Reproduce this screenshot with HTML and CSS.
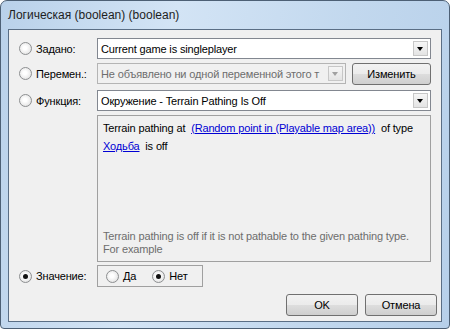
FILE: index.html
```html
<!DOCTYPE html>
<html>
  <head>
    <meta charset="UTF-8">
    <title>Логическая (boolean)</title>
    <link rel="stylesheet" href="styles.css">
  </head>
  <body>
  <div class="window">
    <div class="titlebar">Логическая (boolean) (boolean)</div>
    <div class="client">
      <!-- preset value -->
      <div class="row">
        <div class="choice"><span class="radio"></span>Задано:</div>
        <div class="combo"><span class="combo-text">Current game is singleplayer</span><span class="drop"></span></div>
      </div>
      <!-- variable -->
      <div class="row row2">
        <div class="choice"><span class="radio"></span>Перемен.:</div>
        <div class="combo disabled"><span class="combo-text">Не объявлено ни одной переменной этого т</span><span class="drop"></span></div>
        <button class="btn edit">Изменить</button>
      </div>
      <!-- function -->
      <div class="row row3">
        <div class="choice"><span class="radio"></span>Функция:</div>
        <div class="combo"><span class="combo-text">Окружение - Terrain Pathing Is Off</span><span class="drop"></span></div>
      </div>
      <div class="panel">
        <div class="call">Terrain pathing at&nbsp; <a href="#">(Random point in (Playable map area))</a>&nbsp; of type<br><a href="#">Ходьба</a>&nbsp; is off</div>
        <div class="hint">Terrain pathing is off if it is not pathable to the given pathing type.<br>For example</div>
      </div>
      <!-- constant value -->
      <div class="row row4">
        <div class="choice"><span class="radio on"></span>Значение:</div>
        <div class="group">
          <span class="opt"><span class="radio"></span>Да</span>
          <span class="opt"><span class="radio on"></span>Нет</span>
        </div>
      </div>
      <div class="buttons">
        <button class="btn">OK</button>
        <button class="btn">Отмена</button>
      </div>
    </div>
  </div>
  </body>
</html>
```

FILE: styles.css
```css
/* dialog frame */
body {
  margin: 0;
  font-family: "Liberation Sans", Arial, sans-serif;
  font-size: 11px;
  letter-spacing: -0.15px;
  color: #000;
}
.window {
  width: 450px;
  height: 329px;
  box-sizing: border-box;
  border: 1px solid #4d6075;
  border-radius: 7px 7px 4px 4px;
  padding: 0 7px 6px 7px;
  display: flex;
  flex-direction: column;
  background: linear-gradient(100deg, #b9d1ea 0%, #d3e4f5 35%, #c2d8ee 70%, #b7d0ea 100%);
}
.titlebar {
  height: 28px;
  line-height: 29px;
  font-size: 12px;
  letter-spacing: 0;
  color: #1e1e1e;
}
.client {
  flex: 1;
  border: 1px solid #5a6e85;
  background: #f0f0f0;
  padding: 8px 10px 0 10px;
}

/* rows */
.row {
  display: flex;
  align-items: center;
  height: 21px;
}
.row2 { margin-top: 4px; }
.row3 { margin-top: 6px; }
.row4 { margin-top: 3px; height: 22px; }
.choice {
  width: 78px;
  flex: none;
  display: flex;
  align-items: center;
}
.radio {
  width: 11px;
  height: 11px;
  border: 1px solid #8d8f91;
  border-radius: 50%;
  background: radial-gradient(circle at 45% 45%, #ffffff 20%, #ececec 60%, #d2d2d2 100%);
  margin-right: 4px;
  position: relative;
  flex: none;
}
.radio.on::after {
  content: "";
  position: absolute;
  left: 3px;
  top: 3px;
  width: 5px;
  height: 5px;
  border-radius: 50%;
  background: #111;
}

/* combo boxes */
.combo {
  flex: 1;
  height: 21px;
  box-sizing: border-box;
  border: 1px solid #828790;
  background: #fff;
  display: flex;
  align-items: center;
  padding-left: 3px;
  overflow: hidden;
}
.combo-text {
  flex: 1;
  white-space: nowrap;
  overflow: hidden;
}
.drop {
  width: 15px;
  height: 15px;
  box-sizing: border-box;
  margin-right: 2px;
  border: 1px solid #c7c7c7;
  background: linear-gradient(#f6f6f6, #e4e4e4);
  position: relative;
  flex: none;
}
.drop::after {
  content: "";
  position: absolute;
  left: 3px;
  top: 5px;
  border-left: 3.5px solid transparent;
  border-right: 3.5px solid transparent;
  border-top: 4px solid #000;
}
.combo.disabled {
  background: #f0f0f0;
  border-color: #b4b4b4;
  color: #6d6d6d;
}
.combo.disabled .drop::after {
  border-top-color: #a0a0a0;
}

/* buttons */
.btn {
  font-family: inherit;
  font-size: 11px;
  letter-spacing: -0.15px;
  height: 22px;
  width: 72px;
  border: 1px solid #707070;
  border-radius: 3px;
  background: linear-gradient(#f2f2f2 0%, #ebebeb 50%, #dddddd 51%, #cfcfcf 100%);
  color: #000;
  padding: 0;
}
.edit {
  width: 79px;
  margin-left: 6px;
}

/* description panel */
.panel {
  margin: 4px 0 0 78px;
  height: 147px;
  box-sizing: border-box;
  border: 1px solid #a0a0a0;
  padding: 3px 6px 5px 5px;
  display: flex;
  flex-direction: column;
  justify-content: space-between;
}
.call {
  line-height: 18px;
}
.call a {
  color: #0000d4;
}
.hint {
  color: #6d6d6d;
  line-height: 13px;
}

/* Да / Нет */
.group {
  width: 106px;
  height: 22px;
  box-sizing: border-box;
  border: 1px solid #a0a0a0;
  display: flex;
  align-items: center;
  padding-left: 8px;
  gap: 16px;
}
.opt {
  display: flex;
  align-items: center;
}

.buttons {
  margin: 7px -6px 0 0;
  display: flex;
  justify-content: flex-end;
  gap: 7px;
}
```
